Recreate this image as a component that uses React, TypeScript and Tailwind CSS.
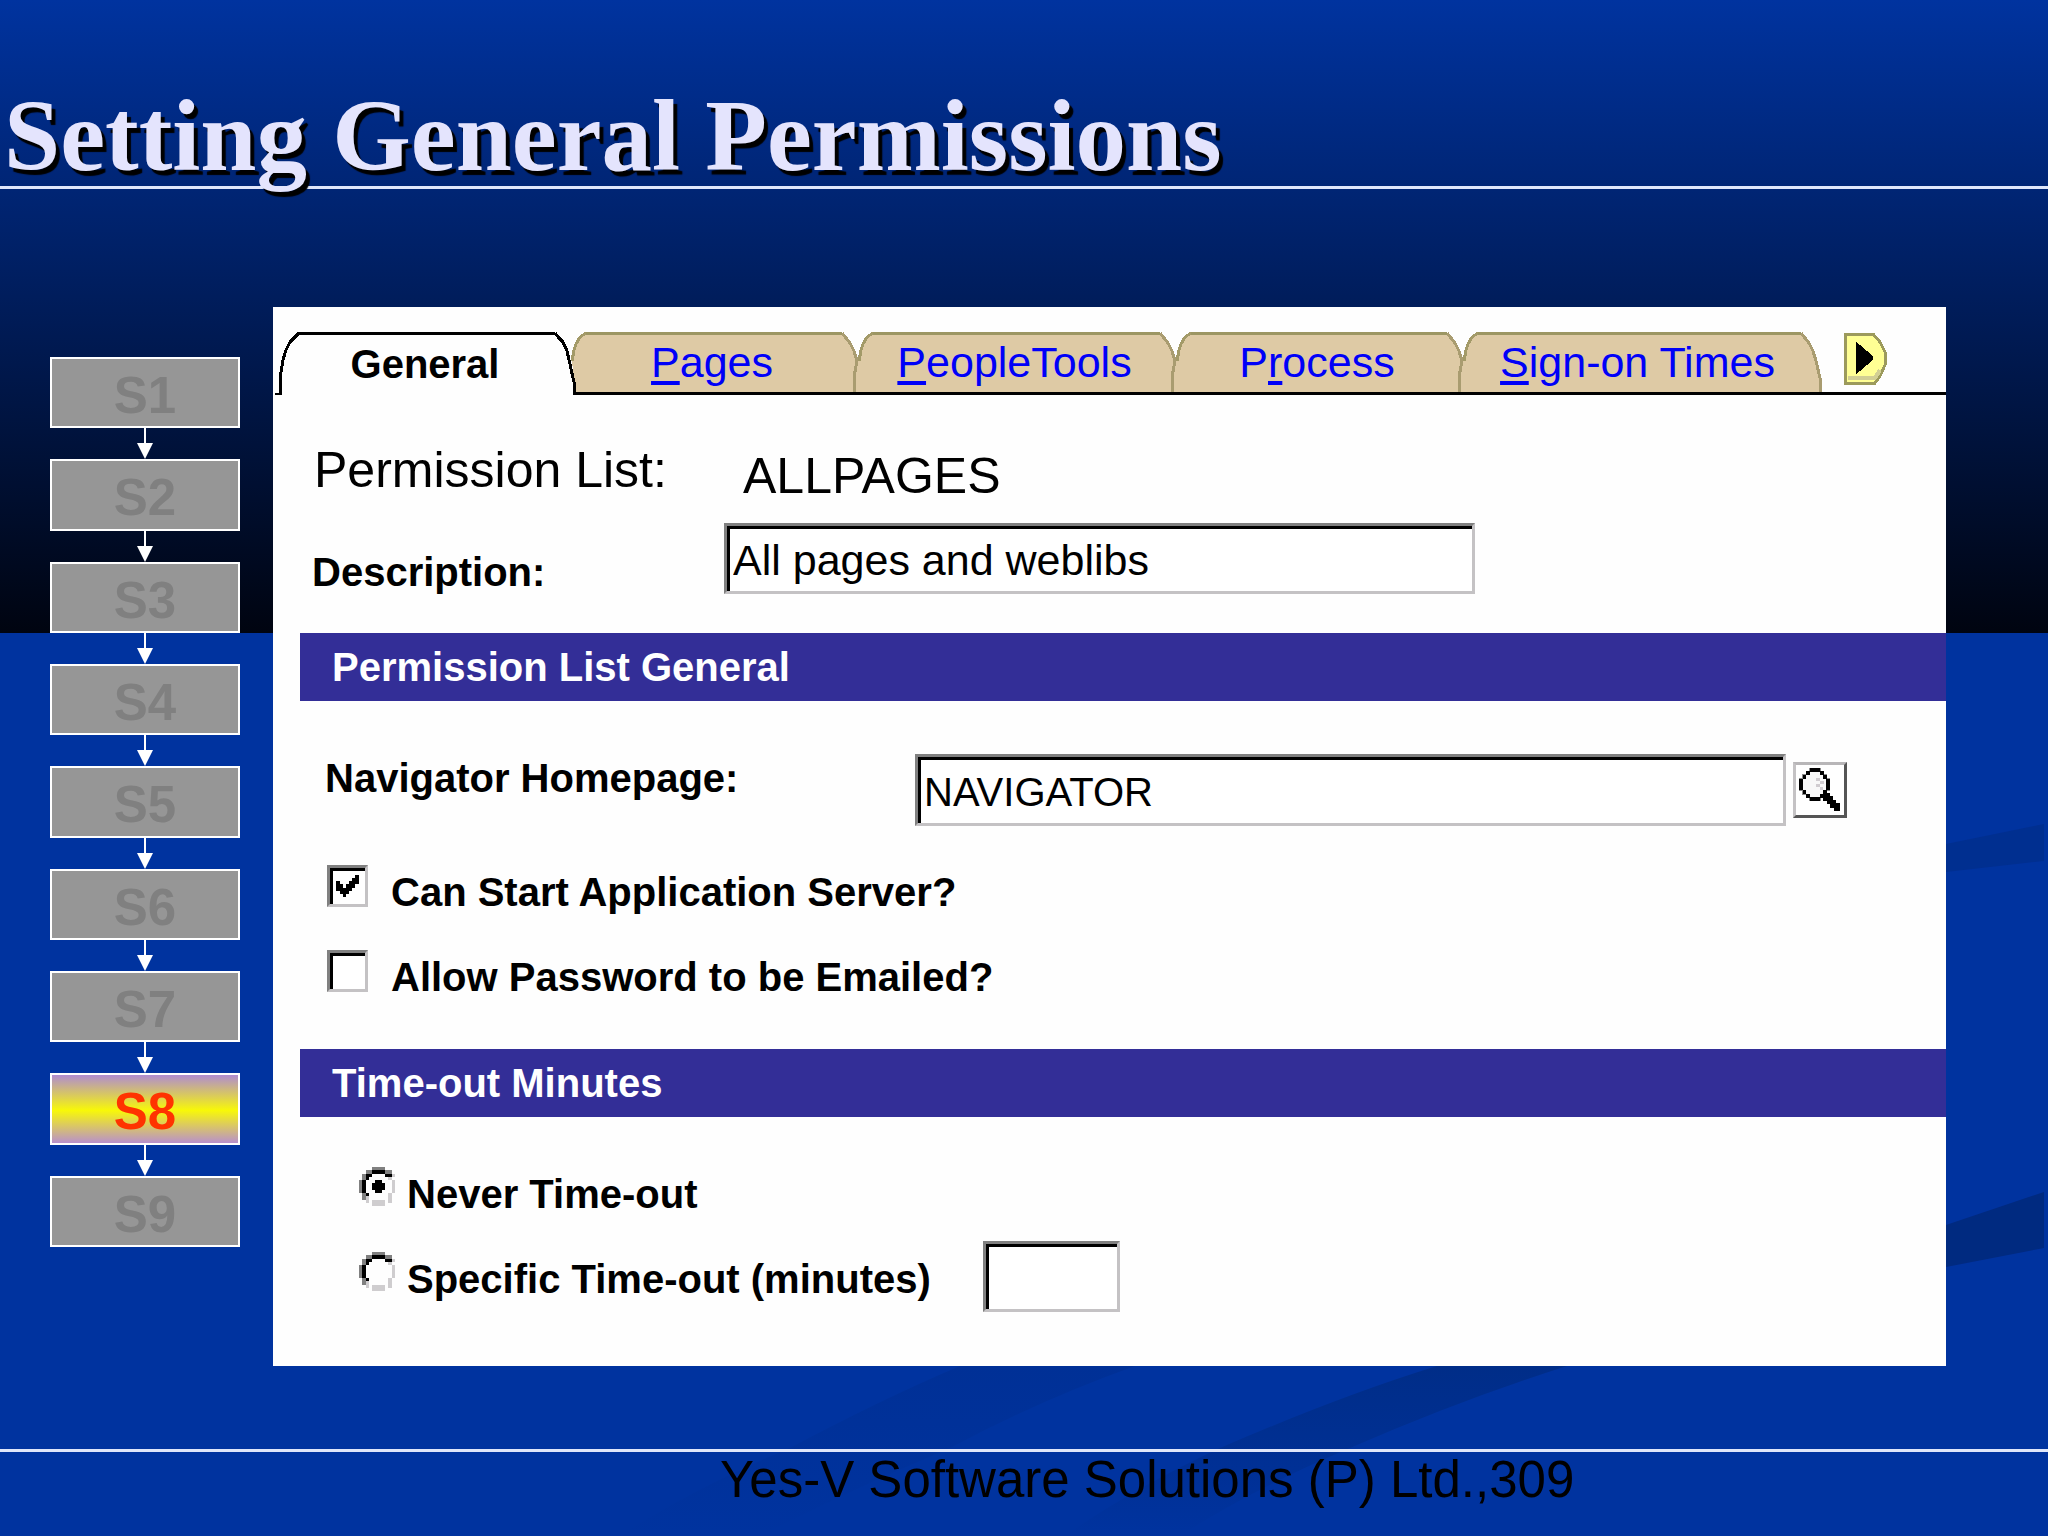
import React from "react";

const steps = ["S1", "S2", "S3", "S4", "S5", "S6", "S7", "S8", "S9"];

const sunken =
  "appearance-none rounded-none border-3 border-t-[#808080] border-l-[#808080] border-r-[#c4c2c4] border-b-[#c4c2c4] bg-white shadow-[inset_3px_3px_0_#000] outline-none";

const radioPixels = [
  "....gggg....",
  "..ggbbbbgg..",
  ".gbb....bbl.",
  ".gb......l..",
  "gb........l.",
  "gb........l.",
  "gb........l.",
  "gb........l.",
  ".gb......l..",
  ".gl......l..",
  "..l.llll.l..",
  "....llll....",
];

const tickPixels = [
  "......b",
  ".....bb",
  "b...bbb",
  "bb.bbb.",
  "bbbbb..",
  ".bbb...",
  "..b....",
];

const pixelColors: Record<string, string> = { g: "#808080", b: "#000", l: "#cfcdcf" };

function Pixels({ rows, x = 0, y = 0 }: { rows: string[]; x?: number; y?: number }) {
  return (
    <>
      {rows.flatMap((row, r) =>
        row
          .split("")
          .map((c, i) =>
            pixelColors[c] ? (
              <rect key={`${r}-${i}`} x={x + i} y={y + r} width="1" height="1" fill={pixelColors[c]} />
            ) : null,
          ),
      )}
    </>
  );
}

function Backdrop() {
  return (
    <svg
      className="pointer-events-none absolute inset-0 h-full w-full"
      viewBox="0 0 2048 1536"
      preserveAspectRatio="none"
      aria-hidden="true"
    >
      <defs>
        <linearGradient id="ribbonA" x1="0" y1="0" x2="0" y2="1">
          <stop offset="0" stopColor="#003096" />
          <stop offset="1" stopColor="#00339f" />
        </linearGradient>
        <linearGradient id="ribbonB" x1="0" y1="0" x2="0" y2="1">
          <stop offset="0" stopColor="#002d88" />
          <stop offset="0.6" stopColor="#003095" />
          <stop offset="1" stopColor="#00339f" />
        </linearGradient>
      </defs>
      <path d="M1946 844 L2044 824 V861 L1946 872Z" fill="#002f90" />
      <path d="M1946 1225 L2044 1192 V1248 L1946 1267Z" fill="#002a80" />
      <path d="M960 1366H1135Q1040 1400 950 1448Q850 1490 760 1536H620Q690 1490 790 1448Q880 1400 960 1366Z" fill="url(#ribbonA)" />
      <path d="M1437 1366H1567Q1460 1400 1350 1448Q1250 1490 1180 1536H1065Q1130 1490 1220 1448Q1340 1396 1437 1366Z" fill="url(#ribbonB)" />
    </svg>
  );
}

function Arrow() {
  return (
    <svg className="h-[31px] w-[18px] shrink-0" viewBox="0 0 18 31" aria-hidden="true">
      <path d="M9 0V18" stroke="#fff" strokeWidth="2" />
      <path d="M1 15H17L9 31Z" fill="#fff" />
    </svg>
  );
}

function Step({ name, active }: { name: string; active: boolean }) {
  return (
    <button
      type="button"
      aria-current={active ? "step" : undefined}
      className={
        active
          ? "w-full flex-1 border-2 border-white bg-[linear-gradient(to_bottom,#b08cd0,#f8f808_52%,#b890cc)] pt-[6px] text-[51px] leading-none font-bold text-[#ff3300]"
          : "w-full flex-1 border-2 border-white bg-[#969696] pt-[6px] text-[51px] leading-none font-bold text-[#808080]"
      }
    >
      {name}
    </button>
  );
}

function LeftCap() {
  return (
    <svg className="h-[63px] w-[24px] shrink-0" viewBox="0 0 24 63" aria-hidden="true" shapeRendering="crispEdges">
      <path d="M0 62H5V46L8 28L11 18L15 10L19 6L24 1" fill="none" stroke="#000" strokeWidth="3" />
    </svg>
  );
}

function Joint({ selected }: { selected?: boolean }) {
  return (
    <svg className="h-[60px] w-[31px] shrink-0" viewBox="0 0 31 60" aria-hidden="true" shapeRendering="crispEdges">
      <path
        d={selected ? "M31 1L22 8L18 18L17 30L19 46V60H31Z" : "M0 1L8 10L13 20L15 32L17 20L22 9L31 1V60H0Z"}
        fill="#decaa5"
      />
      <path d="M31 1L25 5L21 12L19 18L17 29" fill="none" stroke="#a39a68" strokeWidth="3" />
      {selected ? (
        <path d="M0 1L4 6L8 10L12 19L15 32L18 46L19 50V60" fill="none" stroke="#000" strokeWidth="3" />
      ) : (
        <path d="M0 1L4 6L8 11L12 19L15 29L12 45V60" fill="none" stroke="#a99c70" strokeWidth="3" />
      )}
    </svg>
  );
}

function EndCap() {
  return (
    <svg className="h-[60px] w-[22px] shrink-0" viewBox="0 0 22 60" aria-hidden="true" shapeRendering="crispEdges">
      <path d="M0 1L8 10L13 20L16 32L20 46V60H0Z" fill="#decaa5" />
      <path d="M0 1L4 6L8 11L12 19L15 29L19 46V60" fill="none" stroke="#a99c70" strokeWidth="3" />
    </svg>
  );
}

function TabLink({ before = "", hot, after, width }: { before?: string; hot: string; after: string; width: string }) {
  return (
    <a
      href="#"
      role="tab"
      aria-selected="false"
      className={`${width} h-[60px] shrink-0 border-t-3 border-[#9c9663] bg-[#decaa5] pr-1 text-center text-[43px] leading-[54px] whitespace-nowrap text-[#0000f8]`}
    >
      {before}
      <span className="underline decoration-4 underline-offset-4 [text-decoration-skip-ink:none]">{hot}</span>
      {after}
    </a>
  );
}

function Tabs() {
  return (
    <div role="tablist" className="flex h-[63px] items-start pl-[2px]">
      <LeftCap />
      <button
        type="button"
        role="tab"
        aria-selected="true"
        className="h-[60px] w-[256px] shrink-0 border-t-3 border-black pr-1 text-center text-[40px] leading-[54px] font-bold"
      >
        General
      </button>
      <div className="flex h-[63px] flex-1 items-start bg-[linear-gradient(#000,#000)] bg-[length:100%_3px] bg-[position:18px_100%] bg-no-repeat">
        <Joint selected />
        <TabLink width="w-[256px]" hot="P" after="ages" />
        <Joint />
        <TabLink width="w-[287px]" hot="P" after="eopleTools" />
        <Joint />
        <TabLink width="w-[256px]" before="P" hot="r" after="ocess" />
        <Joint />
        <TabLink width="w-[323px]" hot="S" after="ign-on Times" />
        <EndCap />
        <button type="button" aria-label="Show next tabs" className="ml-5 h-[53px] w-[45px] shrink-0">
          <svg className="h-full w-full" viewBox="0 0 45 53" aria-hidden="true" shapeRendering="crispEdges">
            <path d="M2 2H30L37 10L42 20V33L37 44L32 51H2Z" fill="#ffff94" stroke="#9c9a5c" strokeWidth="3" />
            <path d="M5 46H32L37 38" fill="none" stroke="#d2cf94" strokeWidth="4" />
            <path d="M13 10L17 13L30 24V28L17 39L13 42Z" fill="#000" />
          </svg>
        </button>
      </div>
    </div>
  );
}

function SectionBar({ children }: { children: React.ReactNode }) {
  return (
    <h2 className="ml-[27px] h-[68px] bg-[#332e97] pt-[2px] pl-8 text-[40px] leading-[64px] font-bold text-white">
      {children}
    </h2>
  );
}

function Check({ id, label, checked }: { id: string; label: string; checked?: boolean }) {
  return (
    <div className="flex items-start">
      <span className="relative h-[42px] w-[41px]">
        <input id={id} type="checkbox" defaultChecked={checked} className={`peer block h-full w-full ${sunken}`} />
        <svg
          className="pointer-events-none invisible absolute inset-0 h-full w-full peer-checked:visible"
          viewBox="0 0 13 13"
          preserveAspectRatio="none"
          aria-hidden="true"
          shapeRendering="crispEdges"
        >
          <Pixels rows={tickPixels} x={3} y={3} />
          <path d="M3 6H4V8H3ZM9 4H10V5H9Z" fill="#000" />
        </svg>
      </span>
      <label htmlFor={id} className="ml-[23px] text-[40px] leading-[54px] font-bold">
        {label}
      </label>
    </div>
  );
}

function RadioDot({ id, checked }: { id: string; checked?: boolean }) {
  return (
    <span className="relative h-[39px] w-[39px] shrink-0">
      <input
        id={id}
        type="radio"
        name="timeout"
        defaultChecked={checked}
        className="peer block h-full w-full appearance-none rounded-full"
      />
      <svg
        className="pointer-events-none absolute inset-0 h-full w-full"
        viewBox="0 0 12 12"
        preserveAspectRatio="none"
        aria-hidden="true"
        shapeRendering="crispEdges"
      >
        <Pixels rows={radioPixels} />
      </svg>
      <svg
        className="pointer-events-none invisible absolute inset-0 h-full w-full peer-checked:visible"
        viewBox="0 0 12 12"
        preserveAspectRatio="none"
        aria-hidden="true"
        shapeRendering="crispEdges"
      >
        <path d="M5 4H7V5H8V7H7V8H5V7H4V5H5Z" fill="#000" />
      </svg>
    </span>
  );
}

function SearchIcon() {
  return (
    <svg className="h-full w-full" viewBox="0 0 48 50" aria-hidden="true" shapeRendering="crispEdges">
      <path
        d="M13 3H25V6H28V9H31V13H34V26H31V30H28V33H25V36H13V33H10V30H6V26H3V13H6V9H10V6H13Z"
        fill="#8a8a8a"
      />
      <path
        d="M14 3H24V6H28V10H31V14H34V25H31V29H27V33H24V36H14V33H10V29H7V25H3V14H7V10H10V6H14Z"
        fill="#000"
      />
      <path d="M14 7H24V10H27V14H30V25H27V29H24V32H14V29H10V25H7V14H10V10H14Z" fill="#f8f8f8" />
      <path d="M20 13H24V16H20ZM24 16H28V19H24ZM20 19H24V22H20ZM24 22H27V25H24Z" fill="#d0ccd0" />
      <path d="M27 28H34V31H37V35H40V38H44V46H38V43H34V39H31V36H27Z" fill="#000" />
    </svg>
  );
}

export default function App() {
  return (
    <div className="relative flex min-h-screen flex-col overflow-hidden bg-[linear-gradient(to_bottom,#00339f_0,#000410_633px,#00339f_633px)] font-['Liberation_Sans',Arial,sans-serif] text-black">
      <Backdrop />
      <header className="relative h-[189px] border-b-3 border-[#dfe6fa] pt-[80px] pl-1">
        <h1 className="font-['Liberation_Serif','Times_New_Roman',serif] text-[101px] leading-[112px] font-bold whitespace-nowrap text-[#e4e4fd] [text-shadow:4px_5px_1px_#000]">
          Setting General Permissions
        </h1>
      </header>

      <main className="relative flex items-start pt-[118px] pr-[102px] pb-[83px] pl-[50px]">
        <nav aria-label="Steps" className="mt-[50px] flex h-[890px] w-[190px] shrink-0 flex-col items-center">
          {steps.map((name, i) => (
            <React.Fragment key={name}>
              {i > 0 && <Arrow />}
              <Step name={name} active={name === "S8"} />
            </React.Fragment>
          ))}
        </nav>

        <section className="ml-[33px] flex-1 bg-[#fefefe] pt-[25px] pb-[54px]">
          <Tabs />

          <div className="mt-[45px] flex items-start pl-[41px] text-[50px] leading-[60px]">
            <span className="w-[410px]">Permission List:</span>
            <span className="pt-[6px] pl-[19px]">ALLPAGES</span>
          </div>
          <div className="mt-[17px] flex pl-[39px]">
            <label htmlFor="description" className="w-[412px] self-end text-[40px] leading-[44px] font-bold">
              Description:
            </label>
            <input
              id="description"
              type="text"
              defaultValue="All pages and weblibs"
              className={`h-[71px] w-[751px] pt-1 pl-[6px] text-[43px] ${sunken}`}
            />
          </div>

          <div className="mt-[39px]">
            <SectionBar>Permission List General</SectionBar>
          </div>
          <div className="mt-[53px] flex items-center pr-[99px] pl-[52px]">
            <label htmlFor="homepage" className="w-[590px] self-start text-[40px] leading-[48px] font-bold">
              Navigator Homepage:
            </label>
            <input
              id="homepage"
              type="text"
              defaultValue="NAVIGATOR"
              className={`h-[72px] min-w-0 flex-1 pt-1 pl-[6px] text-[40px] ${sunken}`}
            />
            <button
              type="button"
              aria-label="Look up homepage"
              className="ml-[7px] h-[56px] w-[54px] border-3 border-t-[#b8b6b8] border-r-[#555] border-b-[#555] border-l-[#c4c2c4] bg-white"
            >
              <SearchIcon />
            </button>
          </div>

          <div className="mt-[39px] flex flex-col gap-[31px] pl-[54px]">
            <Check id="start" label="Can Start Application Server?" checked />
            <Check id="email" label="Allow Password to be Emailed?" />
          </div>

          <div className="mt-[45px]">
            <SectionBar>Time-out Minutes</SectionBar>
          </div>
          <div className="mt-[50px] flex items-start pl-[86px]">
            <RadioDot id="never" checked />
            <label htmlFor="never" className="ml-[9px] text-[40px] leading-[54px] font-bold">
              Never Time-out
            </label>
          </div>
          <div className="mt-5 flex items-start pl-[86px]">
            <div className="flex pt-[11px]">
              <RadioDot id="specific" />
              <label htmlFor="specific" className="ml-[9px] w-[576px] text-[40px] leading-[54px] font-bold">
                Specific Time-out (minutes)
              </label>
            </div>
            <input type="text" aria-label="Minutes" className={`h-[71px] w-[137px] pl-[6px] text-[40px] ${sunken}`} />
          </div>
        </section>
      </main>

      <footer className="relative flex flex-1 border-t-3 border-[#dfe6fa] pl-[720px] text-[51px] leading-[56px] whitespace-nowrap">
        <span>Yes-V Software Solutions (P) Ltd.,</span>
        <span>309</span>
      </footer>
    </div>
  );
}
